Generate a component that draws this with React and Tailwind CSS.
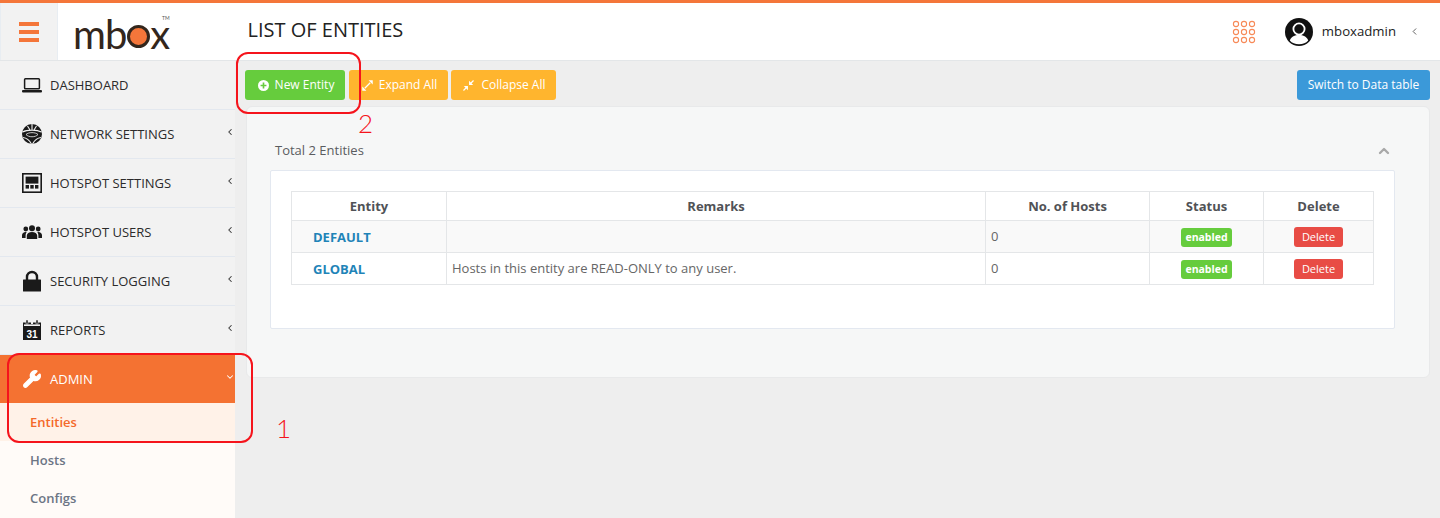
import React from "react";
import { ChevronLeft, ChevronDown, ChevronUp, Wrench } from "lucide-react";

const Laptop = () => (
  <svg viewBox="0 0 20 15" className="w-5 h-[15px]">
    <rect x="2.6" y="0.8" width="14.8" height="10" rx="0.8" fill="none" stroke="#1a1a1a" strokeWidth="1.5" />
    <rect x="0" y="12" width="20" height="2.6" rx="1" fill="#1a1a1a" />
  </svg>
);
const Net = () => (
  <svg viewBox="0 0 20 20" className="w-5 h-5" fill="#1a1a1a">
    <circle cx="10" cy="10" r="10" />
    <path d="M0.5 8C5 5.5 15 5.5 19.5 8M5.5 2 8 6M14.5 2 12 6M10 0v6M1 13.5c4 .5 6 2 8.5 6.5M19 13.5c-4 .5-6 2-8.5 6.5" stroke="#f2f2f2" strokeWidth="1.1" fill="none" />
    <path d="M4 10.5c2.5-2.5 9.5-2.5 12 0-2.5 3-9.5 3-12 0z" fill="#1a1a1a" stroke="#f2f2f2" strokeWidth="0.8" />
  </svg>
);
const Hotspot = () => (
  <svg viewBox="0 0 20 20" className="w-5 h-5">
    <rect x="0" y="0" width="20" height="20" fill="#1a1a1a" />
    <rect x="1.6" y="1.6" width="16.8" height="16.8" fill="#f2f2f2" />
    <rect x="3.6" y="3.6" width="12.8" height="7" fill="#1a1a1a" />
    <rect x="3.6" y="12" width="3.4" height="3.6" fill="#1a1a1a" />
    <rect x="8.3" y="12" width="3.4" height="3.6" fill="#1a1a1a" />
    <rect x="13" y="12" width="3.4" height="3.6" fill="#1a1a1a" />
  </svg>
);
const Padlock = () => (
  <svg viewBox="0 0 20 22" className="w-5 h-[22px]">
    <path d="M5 10V7a5 5 0 0 1 10 0v3" fill="none" stroke="#1a1a1a" strokeWidth="2.4" />
    <rect x="1" y="9.5" width="18" height="12" rx="0.5" fill="#1a1a1a" />
  </svg>
);
const Group = () => (
  <svg viewBox="0 0 20 14" className="w-5 h-[14px]" fill="#1a1a1a">
    <circle cx="10" cy="3.2" r="3" />
    <path d="M4.8 14v-3.2C4.8 8.3 7 7 10 7s5.2 1.3 5.2 3.8V14z" />
    <circle cx="3.8" cy="4" r="2.4" />
    <path d="M0 13v-2.8C0 8.3 1.5 7 3.8 7c.4 0 .7 0 1 .1C3.9 8.2 3.6 9.4 3.6 11v2z" />
    <circle cx="16.2" cy="4" r="2.4" />
    <path d="M20 13v-2.8C20 8.3 18.5 7 16.2 7c-.4 0-.7 0-1 .1.9 1.1 1.2 2.3 1.2 3.9v2z" />
  </svg>
);
const Calendar = () => (
  <svg viewBox="0 0 18 20" className="w-[18px] h-5">
    <path d="M0 2.5h18V20H0z" fill="#1a1a1a" />
    <rect x="1" y="4.4" width="16" height="1.6" fill="#f2f2f2" />
    <rect x="3" y="0" width="2" height="4" fill="#1a1a1a" stroke="#f2f2f2" strokeWidth="0.5" />
    <rect x="13" y="0" width="2" height="4" fill="#1a1a1a" stroke="#f2f2f2" strokeWidth="0.5" />
    <rect x="8" y="1" width="2" height="3" fill="#f2f2f2" />
    <text x="9" y="17.5" textAnchor="middle" fontSize="10" fontWeight="700" fontFamily="Liberation Sans, sans-serif" fill="#fff">31</text>
  </svg>
);
const Plus = () => (
  <svg viewBox="0 0 12 12" className="h-[11px] w-[11px]">
    <circle cx="6" cy="6" r="6" fill="#fff" />
    <path d="M6 2.8v6.4M2.8 6h6.4" stroke="#66cc3d" strokeWidth="1.8" />
  </svg>
);
const Expand = () => (
  <svg viewBox="0 0 12 12" className="h-[11px] w-[11px]" fill="#fff" stroke="#fff">
    <path d="M7.2.3h4.5v4.5z" strokeWidth="0" />
    <path d="M.3 7.2v4.5h4.5z" strokeWidth="0" />
    <path d="M9 3 3 9" strokeWidth="1.3" fill="none" />
  </svg>
);
const Collapse = () => (
  <svg viewBox="0 0 12 12" className="h-[11px] w-[11px]" fill="#fff" stroke="#fff">
    <path d="M6.6.9v4.5h4.5z" strokeWidth="0" />
    <path d="M.9 6.6h4.5v4.5z" strokeWidth="0" />
    <path d="M11.5.5 8.5 3.5M.5 11.5l3-3" strokeWidth="1.3" fill="none" />
  </svg>
);
const Avatar = () => (
  <svg viewBox="0 0 28 28" className="h-7 w-7">
    <circle cx="14" cy="14" r="14" fill="#111" />
    <circle cx="14" cy="11" r="5.6" fill="none" stroke="#fff" strokeWidth="1.8" />
    <path d="M4.8 22.5c1.5-4 5-5.5 9.2-5.5s7.7 1.5 9.2 5.5C21 25 18 26.2 14 26.2S7 25 4.8 22.5z" fill="#fff" />
  </svg>
);
const Dots = () => (
  <svg viewBox="0 0 24 24" className="mt-px h-6 w-6" fill="none" stroke="#f78a58" strokeWidth="1.1">
    {[4, 12, 20].map((y) => [4, 12, 20].map((x) => <circle key={`${x}-${y}`} cx={x} cy={y} r="2.6" />))}
  </svg>
);

const items = [
  ["DASHBOARD", <Laptop />, false],
  ["NETWORK SETTINGS", <Net />, true],
  ["HOTSPOT SETTINGS", <Hotspot />, true],
  ["HOTSPOT USERS", <Group />, true],
  ["SECURITY LOGGING", <Padlock />, true],
  ["REPORTS", <Calendar />, true],
];

const Row = ({ name, remark, shade }) => (
  <tr className={`h-[32px] ${shade ? "bg-[#f9f9f9]" : "bg-white"}`}>
    <td className="border border-[#e4e6e8] pl-[21px] pt-[2px] align-middle text-[13px] font-bold text-[#1f84b8]">{name}</td>
    <td className="border border-[#e4e6e8] px-[5px] align-middle">{remark}</td>
    <td className="border border-[#e4e6e8] px-[5px] align-middle">0</td>
    <td className="border border-[#e4e6e8] text-center align-middle">
      <span className="inline-block h-[19px] w-[51px] rounded-[3px] bg-[#66cc3d] text-center text-[10.5px] leading-[18px] font-bold text-white">enabled</span>
    </td>
    <td className="border border-[#e4e6e8] text-center align-middle">
      <span className="inline-block h-5 w-[49px] rounded-[3px] bg-[#e84c45] text-[11px] leading-5 text-white">Delete</span>
    </td>
  </tr>
);

export default function App() {
  return (
    <div className="relative h-[518px] w-[1440px] overflow-hidden bg-[#eeeeee] font-['Open_Sans',sans-serif] text-[#4f5154]">
      <div className="h-[3px] bg-[#f4763a]" />
      <header className="flex h-[58px] border-b border-[#e3e6e8] bg-white">
        <div className="flex w-[58px] shrink-0 items-center justify-center border-x border-[#e8edf2] bg-[#f2f2f2] pr-px">
          <div className="flex w-5 flex-col gap-[4px]">
            <span className="h-1 bg-[#f4763a]" />
            <span className="h-1 bg-[#f4763a]" />
            <span className="h-1 bg-[#f4763a]" />
          </div>
        </div>
        <div className="relative flex w-[190px] shrink-0 items-center pl-[15px] pt-[4px] font-['Lato',sans-serif] text-[40px] font-normal leading-none text-[#33261c]">
          <span className="tracking-[-1px]">mb</span>
          <span className="mx-[0.5px] mt-[6px] h-[23px] w-[23px] shrink-0 rounded-full border-[3px] border-[#33261c] bg-[#f4763a]" />
          <span className="leading-[24px]">x</span>
          <span className="absolute left-[104px] top-[13px] text-[5px] leading-none text-[#555]">TM</span>
        </div>
        <h1 className="-ml-[0.5px] flex items-center pb-[3px] text-[20px] font-normal text-[#222]">LIST OF ENTITIES</h1>
        <div className="ml-auto flex items-center text-[#222]">
          <Dots />
          <div className="ml-[29px]"><Avatar /></div>
          <span className="ml-[9px] pt-px text-[13.2px]">mboxadmin</span>
          <ChevronLeft size={11} className="ml-[13px] mr-[20px] text-[#555]" />
        </div>
      </header>
      <div className="flex h-[457px]">
        <aside className="w-[235px] shrink-0 bg-[#f2f2f2]">
          {items.map(([label, icon, chevron]) => (
            <div key={label} className="flex h-[49px] items-center border-b border-[#e3e8ef] text-[13px] text-[#2b2b2b]">
              <div className="ml-[22px] flex w-5 justify-center">{icon}</div>
              <span className="ml-[8px] pt-[2px]">{label}</span>
              {chevron && <ChevronLeft size={10} strokeWidth={2.5} className="ml-auto mb-1 text-[#333]" />}
            </div>
          ))}
          <div className="flex h-[48px] items-center bg-[#f47232] text-[13px] text-white">
            <div className="ml-[22px] flex w-5 justify-center"><Wrench size={22} fill="#fff" strokeWidth={1.5} /></div>
            <span className="ml-[8px] pt-[2px]">ADMIN</span>
            <ChevronDown size={10} strokeWidth={2.5} className="ml-auto mb-1" />
          </div>
          <div className="h-[115px] bg-[#fffbf8] text-[13px] font-semibold text-[#6c7585]">
            <div className="flex h-[38px] items-center bg-[#fff2e8] pl-[30px] pt-[2px] text-[#f4692a]">Entities</div>
            <div className="flex h-[38px] items-center pl-[30px] pt-[2px]">Hosts</div>
            <div className="flex h-[38px] items-center pl-[30px] pt-[2px]">Configs</div>
          </div>
        </aside>
        <main className="min-w-0 flex-1 px-[10px] pt-[9px]">
          <div className="flex h-[30px] text-[12px] text-white">
            <button className="flex w-[100px] items-center justify-center gap-[6px] rounded-[3px] bg-[#66cc3d] pl-[2px]"><Plus />New Entity</button>
            <button className="ml-[4px] flex w-[99px] items-center justify-center gap-[6px] rounded-[3px] bg-[#ffb52e] pl-[2px]"><Expand />Expand All</button>
            <button className="ml-[3px] flex w-[105px] items-center justify-center gap-[7px] rounded-[3px] bg-[#ffb52e] pl-[2px]"><Collapse />Collapse All</button>
            <button className="ml-auto w-[133px] rounded-[3px] bg-[#3b99d9]">Switch to Data table</button>
          </div>
          <section className="ml-px mt-[6px] h-[272px] rounded-[6px] border border-[#e8e9ea] bg-[#f6f7f7] pl-[23px] pr-[34px]">
            <div className="relative h-[63px] pl-[5px] pt-[35px] text-[13px] font-medium leading-4 text-[#5a5c5f]">
              Total 2 Entities
              <ChevronUp size={16} strokeWidth={3.5} className="absolute right-[3px] top-[36px] text-[#a8a8a8]" />
            </div>
            <div className="h-[159px] rounded-[2px] border border-[#e3e8f0] bg-white px-[20px] pt-[20px]">
              <table className="w-[1082px] table-fixed border-collapse text-[13px] text-[#666]">
                <colgroup>
                  <col className="w-[155px]" />
                  <col className="w-[539px]" />
                  <col className="w-[164px]" />
                  <col className="w-[114px]" />
                  <col className="w-[110px]" />
                </colgroup>
                <tbody>
                  <tr className="h-[29px] bg-white font-bold text-[#505256]">
                    {["Entity", "Remarks", "No. of Hosts", "Status", "Delete"].map((h) => (
                      <td key={h} className="border border-[#e4e6e8] pt-[2px] text-center align-middle">{h}</td>
                    ))}
                  </tr>
                  <Row name="DEFAULT" remark="" shade />
                  <Row name="GLOBAL" remark="Hosts in this entity are READ-ONLY to any user." />
                </tbody>
              </table>
            </div>
          </section>
        </main>
      </div>
      <div className="absolute left-[7px] top-[353px] h-[90px] w-[246px] rounded-[12px] border-2 border-[#f5141c]" />
      <div className="absolute left-[236px] top-[52px] h-[62px] w-[125px] rounded-[12px] border-2 border-[#f5141c]" />
      <span className="absolute left-[276px] top-[413px] font-['Lato',sans-serif] text-[26px] font-light leading-[30px] text-[#f5141c]">1</span>
      <span className="absolute left-[358px] top-[108px] font-['Lato',sans-serif] text-[26px] font-light leading-[30px] text-[#f5141c]">2</span>
    </div>
  );
}
